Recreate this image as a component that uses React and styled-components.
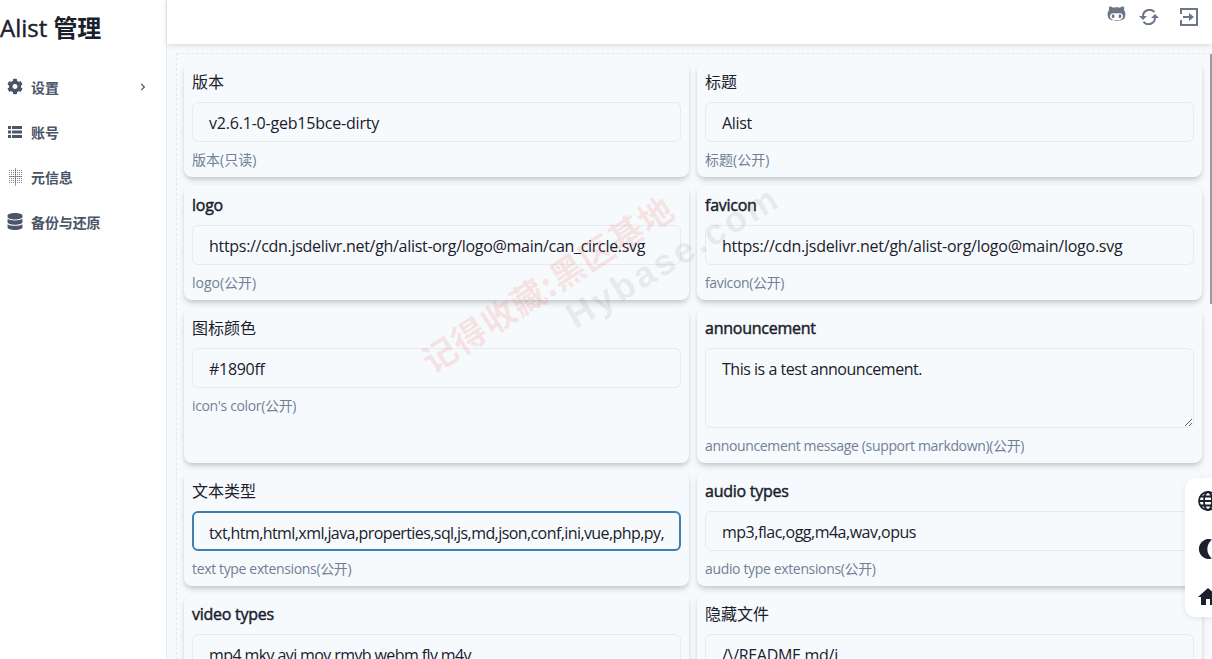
import styled, { createGlobalStyle } from 'styled-components';
import { FaCog, FaDatabase, FaGithubAlt, FaChevronRight } from 'react-icons/fa';

const GlobalStyle = createGlobalStyle`
  * { box-sizing: border-box; }
  html, body { margin: 0; height: 100%; overflow: hidden; }
  body {
    font-family: "Open Sans", "Noto Sans CJK SC", sans-serif;
    color: #1a202c;
    background: #fff;
  }
`;

const Page = styled.div`
  display: flex;
  height: 659px;
  position: relative;
  overflow: hidden;
`;

const Sidebar = styled.aside`
  width: 167px;
  flex: none;
  background: #fff;
  border-right: 1px solid #e8ecf1;
`;

const Logo = styled.h1`
  margin: 0;
  height: 64px;
  padding-top: 11px;
  font-size: 24px;
  line-height: 34px;
  font-weight: 400;
  -webkit-text-stroke: 0.4px currentColor;
`;

const LogoHan = styled.span`
  font-weight: 700;
  letter-spacing: -0.3px;
  -webkit-text-stroke: 0;
`;

const NavItem = styled.div`
  display: flex;
  align-items: center;
  height: 45px;
  padding: 0 19px 0 7px;
  gap: 8px;
  font-size: 14px;
  font-weight: 600;
  letter-spacing: -0.1px;
  color: #4a5568;
`;

const NavIcon = styled.span`
  width: 16px;
  height: 16px;
  flex: none;
  display: flex;
  align-items: center;
  justify-content: center;
`;

const NavLabel = styled.span`
  flex: 1;
`;

const Body = styled.div`
  flex: 1;
  min-width: 0;
  display: flex;
  flex-direction: column;
  background: #f7fafc;
`;

const Header = styled.header`
  height: 44px;
  flex: none;
  background: #fff;
  box-shadow: 0 1px 6px rgba(0, 0, 0, 0.14);
  display: flex;
  justify-content: flex-end;
  align-items: center;
  color: #6b7686;
  padding: 0 14px 10px 0;
`;

const HeaderIcon = styled.span`
  display: flex;
  margin-left: ${({ $gap }) => $gap || 0}px;
  margin-bottom: ${({ $lift }) => $lift || 0}px;
`;

const Content = styled.main`
  margin: 9px 2px 0 9px;
  padding: 8px 8px 0 7px;
  border: 1px dashed #e2e8f0;
  border-right: none;
  display: grid;
  grid-template-columns: 505px 505px;
  column-gap: 8px;
  row-gap: 8px;
  align-content: start;
`;

const Card = styled.section`
  background: #f7fafc;
  border-radius: 8px;
  padding: 8px;
  box-shadow: 0 4px 6px -1px rgba(0, 0, 0, 0.16), 0 2px 4px -1px rgba(0, 0, 0, 0.09);
  min-width: 0;
`;

const Label = styled.div`
  font-size: 16px;
  line-height: 24px;
  font-weight: 400;
  letter-spacing: ${({ $bold }) => ($bold ? '-0.25px' : '0')};
  -webkit-text-stroke: ${({ $bold }) => ($bold ? '0.45px currentColor' : '0')};
  margin-bottom: 8px;
`;

const Input = styled.input`
  display: block;
  width: 100%;
  height: 40px;
  padding: ${({ $focus }) => ($focus ? '3px 15px 0' : '2px 16px 0')};
  background: #f7fafc;
  border: ${({ $focus }) => ($focus ? '2px solid #3d7fae' : '1px solid #e6ebf1')};
  border-radius: 6px;
  font: inherit;
  font-size: 16px;
  letter-spacing: ${({ $track }) => $track ?? -0.3}px;
  color: #1a202c;
  outline: none;
`;

const TextArea = styled.textarea`
  display: block;
  width: 100%;
  height: 80px;
  padding: 8px 16px;
  background: #f7fafc;
  border: 1px solid #e6ebf1;
  border-radius: 6px;
  font: inherit;
  font-size: 16px;
  line-height: 24px;
  letter-spacing: -0.48px;
  color: #1a202c;
  outline: none;
  resize: vertical;
`;

const Help = styled.div`
  margin-top: 8px;
  font-size: 14px;
  line-height: 19px;
  letter-spacing: ${({ $tight }) => ($tight ? '-0.35px' : '0')};
  color: #718096;
`;

const Float = styled.div`
  position: absolute;
  right: 0;
  top: 478px;
  width: 27px;
  height: 139px;
  background: #fff;
  border-radius: 10px 0 0 10px;
  box-shadow: 0 2px 6px rgba(0, 0, 0, 0.08);
  overflow: hidden;
  color: #1a202c;
  display: flex;
  flex-direction: column;
  gap: 28px;
  padding: 13px 0 0 13px;
  svg { flex: none; }
`;

const Scrollbar = styled.div`
  position: absolute;
  right: 0;
  top: 54px;
  width: 2px;
  height: 250px;
  background: #9a9a9a;
`;

const Watermark = styled.div`
  position: absolute;
  white-space: nowrap;
  pointer-events: none;
  transform: translate(-50%, -50%) rotate(${({ $angle }) => $angle}deg);
  left: ${({ $x }) => $x}px;
  top: ${({ $y }) => $y}px;
  font-family: ${({ $family }) => $family};
  font-weight: 700;
  font-size: ${({ $size }) => $size}px;
  letter-spacing: ${({ $track }) => $track}px;
  color: ${({ $color }) => $color};
`;

const rows = [
  { label: '版本', track: -0.2, value: 'v2.6.1-0-geb15bce-dirty', help: '版本(只读)' },
  { label: '标题', value: 'Alist', help: '标题(公开)' },
  { label: 'logo', bold: true, value: 'https://cdn.jsdelivr.net/gh/alist-org/logo@main/can_circle.svg', help: 'logo(公开)' },
  { label: 'favicon', bold: true, track: -0.25, value: 'https://cdn.jsdelivr.net/gh/alist-org/logo@main/logo.svg', help: 'favicon(公开)' },
  { label: '图标颜色', value: '#1890ff', help: "icon's color(公开)" },
  { label: 'announcement', bold: true, area: true, value: 'This is a test announcement.', help: 'announcement message (support markdown)(公开)' },
  { label: '文本类型', focus: true, track: -0.58, value: 'txt,htm,html,xml,java,properties,sql,js,md,json,conf,ini,vue,php,py,bat,gitignore,yml,go,sh,c,cpp,h,hpp', help: 'text type extensions(公开)' },
  { label: 'audio types', bold: true, track: -0.5, value: 'mp3,flac,ogg,m4a,wav,opus', help: 'audio type extensions(公开)' },
  { label: 'video types', bold: true, track: -0.6, value: 'mp4,mkv,avi,mov,rmvb,webm,flv,m4v', help: 'video type extensions(公开)' },
  { label: '隐藏文件', value: '/\\/README.md/i', help: '隐藏文件(公开)' },
];

const ListIcon = () => (
  <svg width="14" height="12" viewBox="0 0 14 12" fill="currentColor">
    <path d="M0 0h3v3H0zM4 0h10v3H4zM0 4.5h3v3H0zM4 4.5h10v3H4zM0 9h3v3H0zM4 9h10v3H4z" />
  </svg>
);

const DottedGridIcon = () => {
  const dots = [];
  for (let y = 2; y < 16; y += 2) {
    for (let x = 1; x < 15; x += 2) {
      dots.push(<rect key={`${x}-${y}`} x={x} y={y} width="1" height="1" />);
    }
  }
  return (
    <svg width="15" height="18" viewBox="0 0 15 18" fill="currentColor">
      <g opacity="0.7">{dots}</g>
      <path d="M7 0h1v18H7zM1 8h13v1H1z" opacity="0.55" />
    </svg>
  );
};

const nav = [
  { icon: <FaCog size={17} />, label: '设置', more: true },
  { icon: <ListIcon />, label: '账号' },
  { icon: <DottedGridIcon />, label: '元信息' },
  { icon: <FaDatabase size={17} />, label: '备份与还原' },
];

const SyncIcon = () => (
  <svg width="20" height="16" viewBox="0 0 20 16" fill="none" stroke="currentColor" strokeWidth="2">
    <path d="M15.5 3.2A6.5 6.5 0 0 0 4 7.5" />
    <path d="M4.5 12.8A6.5 6.5 0 0 0 16 8.5" />
    <path d="M0 7h8l-4 4zM20 9h-8l4-4z" fill="currentColor" stroke="none" />
  </svg>
);

const ExitIcon = () => (
  <svg width="18" height="18" viewBox="0 0 18 18" fill="none" stroke="currentColor" strokeWidth="2">
    <path d="M1 6V1h16v16H1v-5" />
    <path d="M3 9h7" />
    <path d="M9 5l5 4-5 4z" fill="currentColor" stroke="none" />
  </svg>
);

const GlobeIcon = () => (
  <svg width="20" height="20" viewBox="0 0 20 20" fill="none" stroke="currentColor" strokeWidth="1.8">
    <circle cx="10" cy="10" r="9" />
    <ellipse cx="10" cy="10" rx="4" ry="9" />
    <path d="M1 10h18M2.2 5.5h15.6M2.2 14.5h15.6" />
  </svg>
);

const MoonIcon = () => (
  <svg width="20" height="20" viewBox="0 0 20 20" fill="currentColor">
    <path d="M14 .5A10 10 0 1 0 14 19.5A12 12 0 0 1 14 .5z" />
  </svg>
);

const HomeIcon = () => (
  <svg width="20" height="20" viewBox="0 0 20 20" fill="currentColor">
    <path d="M10 1l10 9h-3v8h-5v-6H8v6H3v-8H0z" />
  </svg>
);

const App = () => (
  <Page>
    <GlobalStyle />
    <Sidebar>
      <Logo>Alist <LogoHan>管理</LogoHan></Logo>
      {nav.map((item) => (
        <NavItem key={item.label}>
          <NavIcon>{item.icon}</NavIcon>
          <NavLabel>{item.label}</NavLabel>
          {item.more && <FaChevronRight size={8} />}
        </NavItem>
      ))}
    </Sidebar>
    <Body>
      <Header>
        <HeaderIcon $lift={7}><FaGithubAlt size={19} /></HeaderIcon>
        <HeaderIcon $gap={13}><SyncIcon /></HeaderIcon>
        <HeaderIcon $gap={21}><ExitIcon /></HeaderIcon>
      </Header>
      <Content>
        {rows.map((row) => (
          <Card key={row.label}>
            <Label $bold={row.bold}>{row.label}</Label>
            {row.area
              ? <TextArea readOnly value={row.value} />
              : <Input readOnly $focus={row.focus} $track={row.track} value={row.value} />}
            <Help $tight={/[a-z]{5}/.test(row.help)}>{row.help}</Help>
          </Card>
        ))}
      </Content>
    </Body>
    <Scrollbar />
    <Float>
      <GlobeIcon />
      <MoonIcon />
      <HomeIcon />
    </Float>
    <Watermark $x={547} $y={283} $angle={-33} $size={34} $track={1} $family={'"Noto Sans CJK SC", sans-serif'} $color="rgba(235, 70, 60, 0.13)">记得收藏:黑区基地</Watermark>
    <Watermark $x={673} $y={257} $angle={-31} $size={36} $track={3} $family={'"Liberation Sans", sans-serif'} $color="rgba(120, 120, 120, 0.12)">Hybase.com</Watermark>
  </Page>
);

export default App;
